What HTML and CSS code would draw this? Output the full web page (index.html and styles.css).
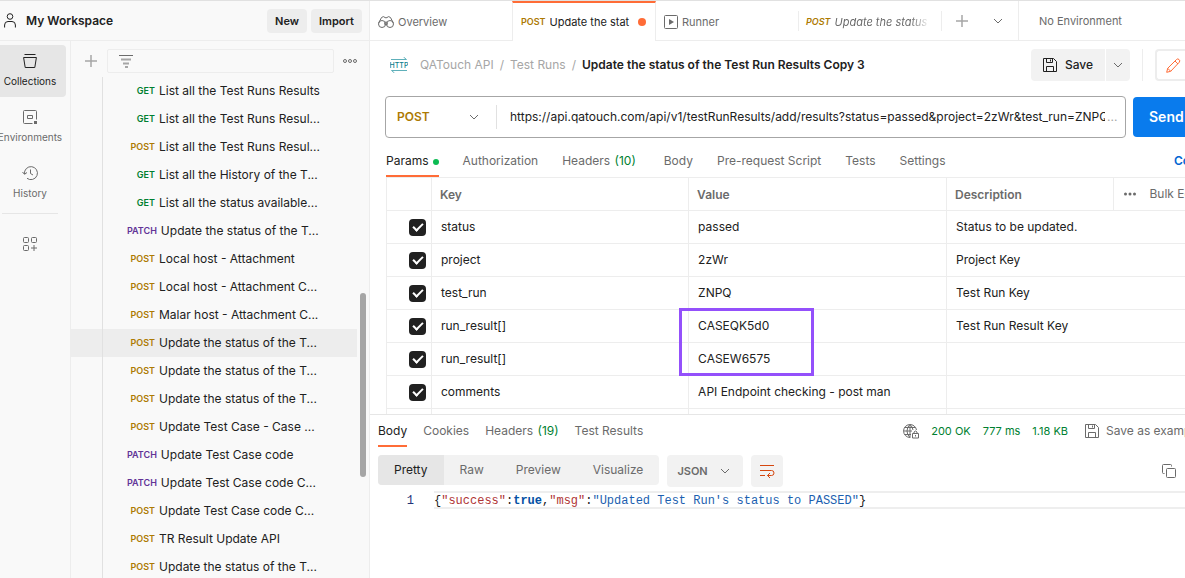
FILE: index.html
```
<!DOCTYPE html>
<html lang="en">

<head>
    <meta charset="UTF-8">
    <meta name="viewport" content="width=device-width, initial-scale=1.0">
    <title>My Workspace</title>
    <link rel="stylesheet" href="styles.css">
</head>

<body>
    <svg class="sprite" aria-hidden="true">
        <symbol id="chevron" viewBox="0 0 10 10"><path d="M1 3l4 4 4-4" /></symbol>
        <symbol id="plus" viewBox="0 0 12 12"><path d="M6 0v12M0 6h12" stroke-width="1.5" /></symbol>
        <symbol id="floppy" viewBox="0 0 14 14"><path d="M.5.5h10l3 3v10H.5zM3.500 .5v4h6v-4M3.500 13.500v-5h7v5M7.500 1.500v2" /></symbol>
    </svg>

    <aside class="sidebar">
        <header class="workspace">
            <svg class="icon" width="12" height="15" viewBox="0 0 12 15"><circle cx="6" cy="3.500" r="2.800" /><path d="M.6 14.500v-2.500q0-3.500 3.400-3.500h4q3.400 0 3.400 3.500v2.500" /></svg>
            <h1>My Workspace</h1>
            <button class="btn">New</button>
            <button class="btn">Import</button>
        </header>

        <div class="sidebar-body">
            <nav class="rail">
                <button class="rail-item selected">
                    <svg class="icon" width="14" height="14" viewBox="0 0 14 14"><path d="M1.500.5h11M.6 3.500h12.800l-1.600 10H2.200z" /></svg>
                    Collections
                </button>
                <button class="rail-item">
                    <svg class="icon" width="14" height="14" viewBox="0 0 14 14"><path d="M9.500 13.500h-8q-1 0-1-1v-11q0-1 1-1h11q1 0 1 1v8M4.500 5.500h5v3h-5z" /><path class="solid" d="M11 11h3v3h-3z" /></svg>
                    Environments
                </button>
                <button class="rail-item">
                    <svg class="icon" width="16" height="14" viewBox="0 0 16 14"><path d="M2.500 8A6.500 6.500 0 1 1 5 12.300M.5 6l2 2.300L5 6.500M8.500 3.500v4l2.500 1.500" /></svg>
                    History
                </button>
                <hr>
                <button class="rail-item" aria-label="Configure sidebar">
                    <svg class="icon" width="14" height="14" viewBox="0 0 14 14"><rect x=".5" y=".5" width="5" height="5" rx="1" /><rect x="8.500" y=".5" width="5" height="5" rx="1" /><rect x=".5" y="8.500" width="5" height="5" rx="1" /><path d="M11 8v6M8 11h6" /></svg>
                </button>
            </nav>

            <div class="collections">
                <div class="filter-row">
                    <button class="icon-btn" aria-label="Add collection"><svg class="icon light" width="12" height="12"><use href="#plus" /></svg></button>
                    <label class="filter">
                        <svg class="icon" width="14" height="13" viewBox="0 0 14 13"><path d="M0 .5h14" /><path class="pale" d="M2 4.500h10M4 8.500h6M6 12h3" /></svg>
                        <input type="text" aria-label="Filter collections">
                    </label>
                    <button class="icon-btn" aria-label="More"><svg class="icon" width="14" height="4" viewBox="0 0 14 4"><circle cx="2" cy="2" r="1.500" /><circle cx="7" cy="2" r="1.500" /><circle cx="12" cy="2" r="1.500" /></svg></button>
                </div>
                <ul class="tree">
                    <li><span class="method get">GET</span><a href="#">List all the Test Runs Results</a></li>
                    <li><span class="method get">GET</span><a href="#">List all the Test Runs Resul...</a></li>
                    <li><span class="method post">POST</span><a href="#">List all the Test Runs Resul...</a></li>
                    <li><span class="method get">GET</span><a href="#">List all the History of the T...</a></li>
                    <li><span class="method get">GET</span><a href="#">List all the status available...</a></li>
                    <li><span class="method patch">PATCH</span><a href="#">Update the status of the T...</a></li>
                    <li><span class="method post">POST</span><a href="#">Local host - Attachment</a></li>
                    <li><span class="method post">POST</span><a href="#">Local host - Attachment C...</a></li>
                    <li><span class="method post">POST</span><a href="#">Malar host - Attachment C...</a></li>
                    <li class="selected"><span class="method post">POST</span><a href="#">Update the status of the T...</a></li>
                    <li><span class="method post">POST</span><a href="#">Update the status of the T...</a></li>
                    <li><span class="method post">POST</span><a href="#">Update the status of the T...</a></li>
                    <li><span class="method post">POST</span><a href="#">Update Test Case - Case ...</a></li>
                    <li><span class="method patch">PATCH</span><a href="#">Update Test Case code</a></li>
                    <li><span class="method patch">PATCH</span><a href="#">Update Test Case code C...</a></li>
                    <li><span class="method post">POST</span><a href="#">Update Test Case code C...</a></li>
                    <li><span class="method post">POST</span><a href="#">TR Result Update API</a></li>
                    <li><span class="method post">POST</span><a href="#">Update the status of the T...</a></li>
                </ul>
                <div class="scroll-thumb"></div>
            </div>
        </div>
    </aside>

    <main class="main">
        <div class="tabbar">
            <button class="tab">
                <svg class="icon" width="16" height="12" viewBox="0 0 16 12"><circle cx="4" cy="8" r="3.500" /><circle cx="12" cy="8" r="3.500" /><circle cx="8" cy="7.500" r="1.500" /><path d="M.7 7L3.500 1.500Q5.500-.3 7 1.500q1 .8 2 0 1.500-1.800 3.500 0L15.300 7" /></svg>
                Overview
            </button>
            <button class="tab active"><span class="tab-method post">POST</span><span class="tab-name">Update the stat</span><span class="unsaved"></span></button>
            <button class="tab">
                <svg class="icon" width="14" height="14" viewBox="0 0 14 14"><rect x=".5" y=".5" width="13" height="13" rx="1" /><path class="solid" d="M5 4l5 3-5 3z" /></svg>
                Runner
            </button>
            <button class="tab preview"><span class="tab-method post">POST</span><span class="tab-name">Update the status</span></button>
            <div class="tab-actions">
                <button class="icon-btn" aria-label="New tab"><svg class="icon light" width="12" height="12"><use href="#plus" /></svg></button>
                <button class="icon-btn" aria-label="Tab list"><svg class="icon" width="10" height="10"><use href="#chevron" /></svg></button>
            </div>
            <button class="environment">No Environment</button>
        </div>

        <div class="crumb-row">
            <svg class="http" width="18" height="16" viewBox="0 0 18 16"><path d="M1 2.500h15.500M13.500 0l3 2.500M1.500 13.500H17M1.500 13.500l3 2.500" /><text x="9" y="11" text-anchor="middle">HTTP</text></svg>
            <nav class="crumbs">
                <a href="#">QATouch API</a><span>/</span><a href="#">Test Runs</a><span>/</span><strong>Update the status of the Test Run Results Copy 3</strong>
            </nav>
            <div class="save-group">
                <button class="save"><svg class="icon" width="14" height="14"><use href="#floppy" /></svg>Save</button>
                <button class="save-more" aria-label="Save options"><svg class="icon" width="10" height="10"><use href="#chevron" /></svg></button>
            </div>
            <div class="edit-group">
                <button class="edit" aria-label="Edit"><svg class="icon orange" width="15" height="15" viewBox="0 0 15 15"><path d="M.7 14.300l1-4L10.500 1.500q1.200-1.200 2.500 0 1.500 1.300.3 2.700L4.700 13.300zM9 3l3 3M1.700 10.300l3 3" /></svg></button>
            </div>
        </div>

        <div class="url-row">
            <div class="url-box">
                <label class="method-pick">
                    <select aria-label="Method"><option>POST</option><option>GET</option><option>PATCH</option></select>
                    <svg class="icon" width="10" height="10"><use href="#chevron" /></svg>
                </label>
                <input type="text" aria-label="Request URL" value="https://api.qatouch.com/api/v1/testRunResults/add/results?status=passed&amp;project=2zWr&amp;test_run=ZNPQ&amp;run_result[]=CASEQK5d0">
                <span class="more">...</span>
            </div>
            <button class="send">Send</button>
        </div>

        <div class="request-tabs">
            <button class="active">Params<i></i></button>
            <button>Authorization</button>
            <button>Headers <em>(10)</em></button>
            <button>Body</button>
            <button>Pre-request Script</button>
            <button>Tests</button>
            <button>Settings</button>
            <a href="#">Cookies</a>
        </div>

        <div class="params">
            <table>
                <colgroup><col class="c-check"><col class="c-key"><col class="c-value"><col><col class="c-bulk"></colgroup>
                <thead>
                    <tr>
                        <th></th>
                        <th>Key</th>
                        <th>Value</th>
                        <th>Description</th>
                        <th class="bulk"><div><svg class="icon solid" width="12" height="4" viewBox="0 0 12 4"><circle cx="1.500" cy="2" r="1.500" /><circle cx="6" cy="2" r="1.500" /><circle cx="10.500" cy="2" r="1.500" /></svg><span>Bulk Edit</span></div></th>
                    </tr>
                </thead>
                <tbody>
                    <tr>
                        <td><input type="checkbox" aria-label="status" checked></td>
                        <td>status</td>
                        <td>passed</td>
                        <td colspan="2">Status to be updated.</td>
                    </tr>
                    <tr>
                        <td><input type="checkbox" aria-label="project" checked></td>
                        <td>project</td>
                        <td>2zWr</td>
                        <td colspan="2">Project Key</td>
                    </tr>
                    <tr>
                        <td><input type="checkbox" aria-label="test_run" checked></td>
                        <td>test_run</td>
                        <td>ZNPQ</td>
                        <td colspan="2">Test Run Key</td>
                    </tr>
                    <tr>
                        <td><input type="checkbox" aria-label="run_result[]" checked></td>
                        <td>run_result[]</td>
                        <td class="marked">CASEQK5d0<div class="highlight"></div></td>
                        <td colspan="2">Test Run Result Key</td>
                    </tr>
                    <tr>
                        <td><input type="checkbox" aria-label="run_result[]" checked></td>
                        <td>run_result[]</td>
                        <td>CASEW6575</td>
                        <td colspan="2"></td>
                    </tr>
                    <tr>
                        <td><input type="checkbox" aria-label="comments" checked></td>
                        <td>comments</td>
                        <td>API Endpoint checking - post man</td>
                        <td colspan="2"></td>
                    </tr>
                    <tr>
                        <td></td>
                        <td></td>
                        <td></td>
                        <td colspan="2"></td>
                    </tr>
                </tbody>
            </table>
        </div>

        <section class="response">
            <div class="response-head">
                <div class="response-tabs">
                    <button class="active">Body</button>
                    <button>Cookies</button>
                    <button>Headers <em>(19)</em></button>
                    <button>Test Results</button>
                </div>
                <div class="response-meta">
                    <svg class="icon" width="16" height="15" viewBox="0 0 16 15"><path d="M7 13.500A6.500 6.500 0 1 1 13.500 6M7 13.500Q4 11 4 7t3-6.500q2.500 2.200 3 5.500M7 .5v13M.5 7H9M1.500 3.500h11M1.500 10.500H8M9.500 9.500h6v4.500h-6zM11 9.500v-1.500q1.500-2 3 0v1.500M12.500 11v1.500" /></svg>
                    <span>200 OK</span><span>777 ms</span><span>1.18 KB</span>
                </div>
                <button class="save-example"><svg class="icon" width="14" height="14"><use href="#floppy" /></svg>Save as example</button>
            </div>

            <div class="view-row">
                <div class="views">
                    <button class="active">Pretty</button>
                    <button>Raw</button>
                    <button>Preview</button>
                    <button>Visualize</button>
                </div>
                <label class="language">
                    <select aria-label="Language"><option>JSON</option><option>XML</option></select>
                    <svg class="icon" width="10" height="10"><use href="#chevron" /></svg>
                </label>
                <button class="wrap" aria-label="Wrap lines"><svg class="icon" width="16" height="14" viewBox="0 0 16 14"><path d="M1 1.500h14M1 6.500h11.500q2.500 0 2.500 2.500t-2.500 2.500H8.500M11 9l-2.500 2.500L11 14M1 11.500h5" /></svg></button>
                <button class="copy" aria-label="Copy"><svg class="icon" width="14" height="14" viewBox="0 0 14 14"><rect x="4.500" y="4.500" width="9" height="9" rx="1" /><path d="M2.500 9.500h-1q-1 0-1-1v-7q0-1 1-1h7q1 0 1 1v1" /></svg></button>
            </div>

            <div class="code">
                <span class="line-no">1</span>
                <code>{<span class="key">"success"</span>:<b>true</b>,<span class="key">"msg"</span>:<span class="str">"Updated Test Run's status to PASSED"</span>}</code>
            </div>
        </section>
    </main>
</body>

</html>
```
FILE: styles.css
```
* {
    box-sizing: border-box;
}

body {
    display: grid;
    grid-template-columns: 370px minmax(0, 1fr);
    height: 100vh;
    margin: 0;
    overflow: hidden;
    border-top: 1px solid #e1e1e1;
    background-color: #fff;
    color: #212121;
    font-family: Inter, "Liberation Sans", sans-serif;
    font-size: 12px;
    line-height: 16px;
}

button,
input,
select {
    margin: 0;
    padding: 0;
    border: 0;
    outline: 0;
    background: none;
    color: inherit;
    font: inherit;
    white-space: nowrap;
}

select {
    appearance: none;
}

button {
    flex-shrink: 0;
    cursor: pointer;
}

a {
    color: inherit;
    text-decoration: none;
}

.sprite {
    position: absolute;
    width: 0;
    height: 0;
}

.icon {
    flex-shrink: 0;
    fill: none;
    stroke: #6b6b6b;
}

.icon.light {
    stroke: #a6a6a6;
}

.icon.orange {
    stroke: #ff6c37;
}

.icon .pale {
    stroke: #a6a6a6;
    stroke-width: 2;
}

.icon.solid,
.icon .solid {
    fill: #6b6b6b;
    stroke: none;
}

.icon-btn {
    display: flex;
    align-items: center;
    justify-content: center;
}

.get {
    color: #007f31;
}

.post {
    color: #ad7a03;
}

.patch {
    color: #623497;
}

/* sidebar */
.sidebar {
    display: flex;
    flex-direction: column;
    min-height: 0;
    border-right: 1px solid #ededed;
    background-color: #f9f9f9;
}

.workspace {
    display: flex;
    align-items: center;
    gap: 4px;
    height: 40px;
    padding: 0 7px 0 4px;
    border-bottom: 1px solid #ededed;
}

.workspace h1 {
    flex: 1;
    margin: 0 0 0 6px;
    font-size: 12px;
    font-weight: 600;
}

.workspace .icon {
    stroke: #212121;
}

.btn {
    height: 24px;
    padding: 0 8px;
    border-radius: 4px;
    background-color: #ededed;
    font-size: 11px;
    font-weight: 600;
}

.sidebar-body {
    display: flex;
    flex: 1;
    min-height: 0;
}

.rail {
    display: flex;
    flex-direction: column;
    flex: 0 0 71px;
    gap: 4px;
    padding-top: 4px;
    overflow: hidden;
    border-right: 1px solid #ededed;
}

.rail-item {
    display: flex;
    flex-direction: column;
    align-items: center;
    justify-content: center;
    gap: 5px;
    width: 72px;
    height: 52px;
    margin-left: -6px;
    border-radius: 4px;
    color: #6b6b6b;
    font-size: 10px;
}

.rail-item.selected {
    background-color: #e6e6e6;
    color: #212121;
}

.rail-item.selected .icon {
    stroke: #212121;
}

.rail hr {
    width: 56px;
    margin: 0 0 0 2px;
    border: 0;
    border-top: 1px solid #e6e6e6;
}

.collections {
    position: relative;
    flex: 1;
    min-width: 0;
    overflow: hidden;
}

.filter-row {
    display: flex;
    height: 36px;
    padding: 8px 3px 4px 4px;
}

.filter-row .icon-btn {
    width: 32px;
}

.filter {
    display: flex;
    flex: 1;
    align-items: center;
    gap: 8px;
    min-width: 0;
    padding-left: 11px;
    border: 1px solid #ededed;
    border-radius: 2px;
}

.filter input {
    flex: 1;
    min-width: 0;
}

.tree {
    margin: 0;
    padding: 0;
    list-style: none;
}

.tree li {
    display: flex;
    align-items: center;
    gap: 4px;
    height: 28px;
    margin-right: 12px;
    background-image: linear-gradient(#e1e1e1, #e1e1e1);
    background-position: 31px 0;
    background-repeat: no-repeat;
    background-size: 1px 28px;
}

.tree li.selected {
    background-color: #ededed;
}

.method {
    display: flex;
    justify-content: flex-end;
    min-width: 84px;
    padding-left: 56px;
    font-size: 9px;
    font-weight: 600;
}

.tree a {
    white-space: nowrap;
}

.scroll-thumb {
    position: absolute;
    top: 252px;
    right: 3px;
    width: 6px;
    height: 184px;
    border-radius: 3px;
    background-color: #a6a6a6;
}

/* tab bar */
.main {
    display: flex;
    flex-direction: column;
    min-width: 0;
    overflow: hidden;
}

.tabbar {
    display: flex;
    flex: 0 0 40px;
}

.tab {
    display: flex;
    align-items: center;
    gap: 4px;
    width: 142px;
    padding: 2px 8px 0;
    border-bottom: 1px solid #ededed;
    color: #6b6b6b;
    font-size: 11px;
}

.tab.active {
    width: 144px;
    padding: 0 9px 0 8px;
    border: 1px solid #ededed;
    border-top: 2px solid #ff6c37;
    border-bottom: 0;
    color: #212121;
}

.tab-method {
    font-size: 9px;
    font-weight: 600;
}

.tab-name {
    flex: 1;
    overflow: hidden;
    text-align: left;
    white-space: nowrap;
}

.unsaved {
    width: 8px;
    height: 8px;
    border-radius: 50%;
    background-color: #ff6c37;
}

.tab.preview {
    width: 144px;
    padding-right: 12px;
    background: linear-gradient(#ededed, #ededed) left / 1px 20px no-repeat, linear-gradient(#ededed, #ededed) right / 1px 20px no-repeat;
    font-style: italic;
}

.tab.preview .tab-name {
    mask-image: linear-gradient(to right, #000 80%, transparent);
}

.tab-actions {
    display: flex;
    flex: 0 0 77px;
    gap: 12px;
    padding-left: 8px;
    border-right: 1px solid #ededed;
    border-bottom: 1px solid #ededed;
}

.tab-actions .icon-btn {
    width: 24px;
}

.environment {
    flex: 1 0 auto;
    padding-left: 20px;
    border-bottom: 1px solid #ededed;
    color: #6b6b6b;
    font-size: 11px;
    text-align: left;
}

/* breadcrumb */
.crumb-row {
    display: flex;
    align-items: center;
    flex: 0 0 48px;
    padding-left: 20px;
}

.http {
    flex-shrink: 0;
    fill: none;
    stroke: #5fb0ba;
}

.http text {
    fill: #0b7c8c;
    stroke: none;
    font-size: 7px;
    font-weight: 500;
}

.crumbs {
    display: flex;
    flex: 1;
    gap: 6px;
    margin-left: 12px;
    color: #a6a6a6;
    white-space: nowrap;
}

.crumbs strong {
    color: #212121;
    font-weight: 600;
}

.save-group {
    display: flex;
    gap: 1px;
    height: 32px;
    font-weight: 500;
}

.save,
.save-more {
    display: flex;
    align-items: center;
    justify-content: center;
    gap: 8px;
    width: 74px;
    border-radius: 4px 0 0 4px;
    background-color: #f2f2f2;
}

.save .icon {
    stroke: #212121;
}

.save-more {
    width: 24px;
    border-radius: 0 4px 4px 0;
}

.edit-group {
    display: flex;
    height: 32px;
    margin-left: 12px;
    padding-left: 12px;
    border-left: 1px solid #ededed;
}

.edit {
    display: flex;
    align-items: center;
    width: 30px;
    padding-left: 9px;
    border: 2px solid #ededed;
    border-right: 0;
    border-radius: 4px 0 0 4px;
}

/* url */
.url-row {
    display: flex;
    align-items: center;
    flex: 0 0 56px;
    gap: 7px;
    padding-left: 15px;
}

.url-box {
    display: flex;
    flex: 1;
    align-items: center;
    min-width: 0;
    height: 42px;
    border: 1px solid #a6a6a6;
    border-radius: 4px;
}

.method-pick {
    display: flex;
    align-items: center;
    flex: 0 0 111px;
    height: 24px;
    padding: 0 17px 0 11px;
    border-right: 1px solid #e1e1e1;
}

.method-pick select {
    flex: 1;
    color: #ad7a03;
    font-weight: 600;
}

.url-box input {
    flex: 1;
    min-width: 0;
    margin-left: 13px;
}

.more {
    width: 20px;
    padding-left: 2px;
    color: #a6a6a6;
}

.send {
    width: 52px;
    height: 40px;
    padding-left: 16px;
    border-radius: 4px 0 0 4px;
    background-color: #097bed;
    color: #fff;
    font-size: 14px;
    font-weight: 600;
    text-align: left;
}

/* request */
.request-tabs {
    display: flex;
    flex: 0 0 32px;
    gap: 24px;
    padding-left: 16px;
    overflow: hidden;
    color: #6b6b6b;
    white-space: nowrap;
}

.request-tabs button,
.response-tabs button {
    padding-top: 2px;
    border-bottom: 2px solid transparent;
}

.request-tabs .active,
.response-tabs .active {
    border-bottom-color: #ff6c37;
    color: #212121;
}

.request-tabs i {
    display: inline-block;
    width: 6px;
    height: 6px;
    margin-left: 4px;
    border-radius: 50%;
    background-color: #0cbb52;
}

.request-tabs em,
.response-tabs em {
    margin-left: 1px;
    color: #007f31;
    font-style: normal;
}

.request-tabs em {
    margin-right: 4px;
}

.request-tabs a {
    flex: 0 0 11px;
    min-width: 0;
    margin-left: auto;
    align-self: center;
    color: #0265d2;
    font-weight: 600;
}

.params {
    flex: 0 0 237px;
    padding-left: 16px;
    overflow: hidden;
}

.params table {
    width: 100%;
    border-collapse: collapse;
    table-layout: fixed;
}

.c-check {
    width: 45px;
}

.c-key {
    width: 32.2%;
}

.c-value {
    width: 32.3%;
}

.c-bulk {
    width: 72px;
}

.params th,
.params td {
    height: 33px;
    padding: 0 9px;
    border: 1px solid #ededed;
    border-right: 0;
    text-align: left;
}

.params th {
    padding: 2px 8px 0;
    color: #6b6b6b;
    font-weight: 600;
}

.params th.bulk {
    padding: 0 0 0 10px;
    overflow: hidden;
    font-weight: 400;
    white-space: nowrap;
}

.bulk div {
    display: flex;
    align-items: center;
    gap: 14px;
}

.params td:first-child {
    padding: 0 5px 0 0;
}

.params input {
    display: block;
    width: 17px;
    height: 17px;
    margin-left: auto;
    border-radius: 4px;
    overflow: hidden;
    appearance: none;
    background-color: #212121;
}

.params input::before {
    content: "";
    display: block;
    width: 8px;
    height: 4px;
    margin: 4px 0 0 4px;
    border: solid #fff;
    border-width: 0 0 2px 2px;
    transform: rotate(-45deg);
}

.marked {
    position: relative;
}

.highlight {
    position: absolute;
    top: -2px;
    left: -10px;
    z-index: 1;
    width: 135px;
    height: 68px;
    border: 3px solid #9450fb;
}

/* response */
.response {
    flex: 1;
    border-top: 1px solid #e6e6e6;
}

.response-head {
    display: flex;
    align-items: center;
    height: 32px;
    padding-left: 8px;
    color: #6b6b6b;
    white-space: nowrap;
}

.response-tabs {
    display: flex;
    align-self: stretch;
    flex: 1;
    gap: 16px;
}

.response-meta {
    display: flex;
    align-items: center;
    gap: 12px;
    color: #007f31;
    font-size: 11px;
}

.save-example {
    display: flex;
    align-items: center;
    gap: 7px;
    width: 100px;
    margin-left: 17px;
    overflow: hidden;
}

.view-row {
    display: flex;
    gap: 8px;
    padding: 8px 9px 0 8px;
}

.views {
    display: flex;
    height: 30px;
    border-radius: 4px;
    background-color: #f2f2f2;
    color: #6b6b6b;
}

.views button {
    padding: 0 16px;
}

.views .active {
    border-radius: 4px 0 0 4px;
    background-color: #e6e6e6;
    color: #212121;
}

.language,
.wrap {
    display: flex;
    align-items: center;
    gap: 12px;
    height: 32px;
    padding: 0 13px 0 10px;
    border-radius: 4px;
    background-color: #f2f2f2;
    color: #6b6b6b;
    font-size: 11px;
    font-weight: 600;
}

.wrap {
    justify-content: center;
    width: 32px;
    padding: 0;
}

.wrap .icon {
    stroke: #d5460e;
}

.copy {
    display: flex;
    align-items: center;
    height: 32px;
    margin-left: auto;
}

.code {
    display: flex;
    gap: 20px;
    margin-top: 4px;
    font-family: "Liberation Mono", "DejaVu Sans Mono", monospace;
    line-height: 14px;
}

.line-no {
    flex: 0 0 44px;
    padding-top: 3px;
    color: #237;
    text-align: right;
}

.code code {
    flex: 1;
    height: 18px;
    padding-top: 1px;
    border-top: 2px solid #eee;
    border-bottom: 2px solid #eee;
    font-family: inherit;
    white-space: nowrap;
}

.code b {
    color: #0451a5;
}

.code .key {
    color: #b03434;
}

.code .str {
    color: #1c5fb0;
}
```
